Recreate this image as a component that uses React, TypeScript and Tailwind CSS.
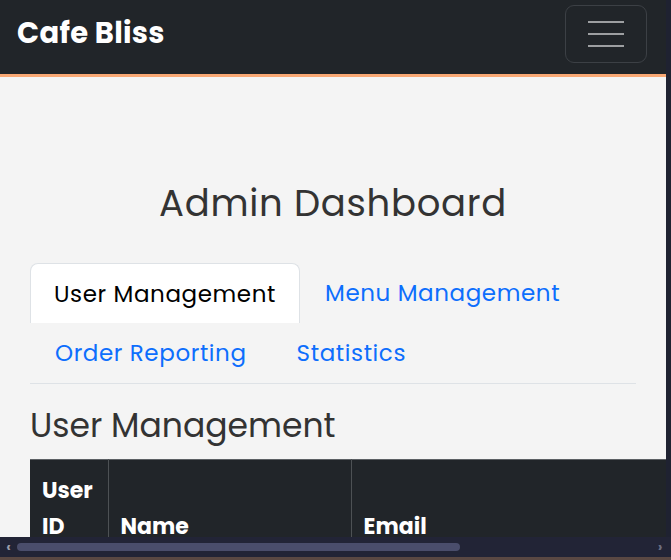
import { ReactNode } from 'react'

const tabs = ['User Management', 'Menu Management', 'Order Reporting', 'Statistics']

const font = "font-['Poppins','Inter',sans-serif]"

// Kopfzelle der Tabelle
const HeadCell = ({ children, className }: { children: ReactNode; className?: string }) => (
  <th className={`align-bottom text-left font-bold text-[22px] leading-[36px] text-white px-3 pt-[9px] pb-0 border-r border-[#4d5154] ${className ?? ''}`}>
    {children}
  </th>
)

function App() {
  return (
    <div className={`h-[560px] flex flex-col overflow-hidden bg-[#222436] ${font}`}>
      <div className="flex flex-1 min-h-0">
        <div className="flex-1 min-w-0 flex flex-col">
          <nav className="h-[77px] shrink-0 bg-[#212529] border-b-[3px] border-[#f9a874] flex items-center justify-between pl-[17px] pr-[19px] pb-[7px]">
            <span className="text-white font-bold text-[29px] tracking-[0.3px]">Cafe Bliss</span>
            <button className="w-[82px] h-[58px] rounded-[9px] border border-[#3c4045] flex flex-col items-center justify-center gap-[10px]">
              <span className="block w-[36px] h-[2px] bg-[#9d9fa1]" />
              <span className="block w-[36px] h-[2px] bg-[#9d9fa1]" />
              <span className="block w-[36px] h-[2px] bg-[#9d9fa1]" />
            </button>
          </nav>
          <main className="flex-1 min-h-0 overflow-hidden bg-[#f4f4f4] pl-[30px] pr-[30px]">
            <h1 className="mt-[101px] text-center text-[37px] leading-[50px] tracking-[0.7px] text-[#333333]">Admin Dashboard</h1>
            <ul className="mt-[35px] flex flex-wrap border-b border-[#dee2e6] text-[23px] tracking-[0.6px]">
              {tabs.map((t, i) => (
                <li key={t}>
                  <a
                    className={
                      i === 0
                        ? 'block h-[60px] leading-[60px] px-[23px] bg-white text-black border border-b-0 border-[#dee2e6] rounded-t-[8px]'
                        : 'block h-[60px] leading-[60px] px-[25px] text-[#0d6efd]'
                    }
                  >
                    {t}
                  </a>
                </li>
              ))}
            </ul>
            <h2 className="mt-[21px] text-[33px] leading-[42px] text-[#333333]">User Management</h2>
            <table className="mt-[12px] w-[700px] bg-[#212529] border-t border-[#5c6064] border-collapse">
              <thead>
                <tr>
                  <HeadCell className="w-[78px] h-[85px]">User ID</HeadCell>
                  <HeadCell className="w-[243px]">Name</HeadCell>
                  <HeadCell className="border-r-0">Email</HeadCell>
                </tr>
              </thead>
            </table>
          </main>
        </div>
        <div className="w-[5px] shrink-0 bg-[#1f2231]" />
      </div>
      <div className="h-[20px] shrink-0 bg-[#222436] flex items-center">
        <span className="w-[17px] text-center text-[#9a9cab] text-[14px] font-bold leading-none">‹</span>
        <div className="w-[443px] h-[8px] rounded-full bg-[#4a4d6b]" />
        <div className="flex-1" />
        <span className="w-[22px] text-center text-[#6b6e80] text-[14px] font-bold leading-none">›</span>
      </div>
      <div className="h-[3px] shrink-0 bg-[#5a4843]" />
    </div>
  )
}

export default App
